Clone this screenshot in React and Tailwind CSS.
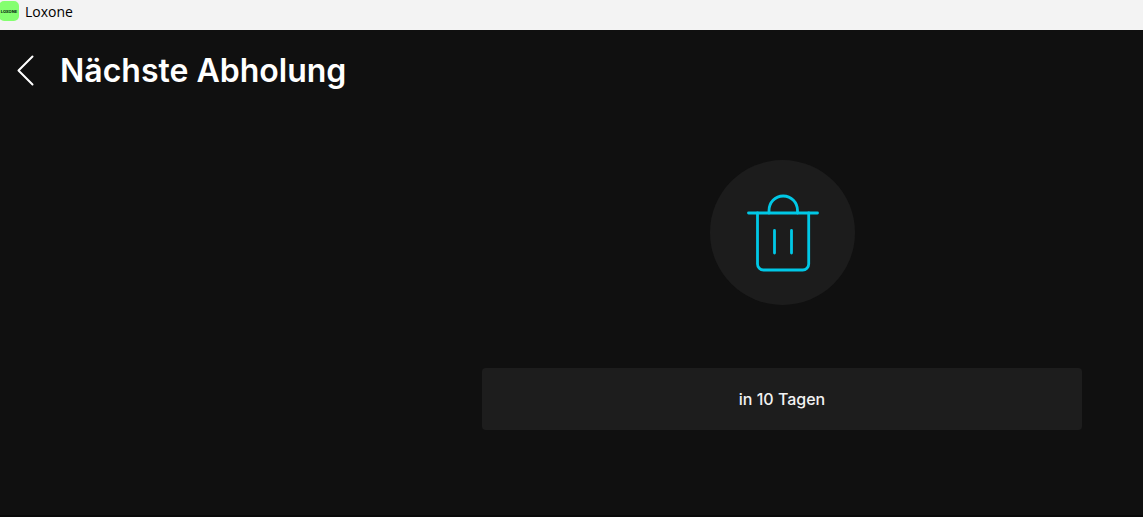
import React from 'react';

const daysUntilPickup = 10;

function TitleBar() {
  return (
    <div className="flex h-[30px] items-start bg-[#f3f3f3] text-black">
      <svg className="mt-px h-5 w-[19px]" viewBox="0 0 19 20" aria-hidden="true">
        <rect x="-1" width="20" height="20" rx="5" fill="#84ff70" />
        <text x="9" y="12" textAnchor="middle" fontSize="4" fontWeight="800" fontFamily="Inter, sans-serif" fill="#0f3515">LOXONE</text>
      </svg>
      <span className="ml-1.5 font-['Open_Sans',sans-serif] text-sm leading-6">Loxone</span>
    </div>
  );
}

function TrashIcon() {
  return (
    <svg
      className="size-full"
      viewBox="0 0 145 145"
      fill="none"
      stroke="#00c8e6"
      strokeWidth="2.8"
      strokeLinecap="round"
      strokeLinejoin="round"
      aria-hidden="true"
    >
      <path d="M38.5 53H107.5" />
      <path d="M59 53V50.5C59 42.5 65 36 73.2 36S87.5 42.5 87.5 50.5V53" />
      <path d="M47.5 53V104A6 6 0 0 0 53.5 110H92.7A6 6 0 0 0 98.7 104V53" />
      <path d="M64.5 70.5V93M81.5 70.5V93" />
    </svg>
  );
}

function App() {
  return (
    <div className="flex min-h-screen flex-col bg-[#101010] font-[Inter,sans-serif] text-white">
      <TitleBar />
      <header className="flex h-20 items-center pl-4">
        <button type="button" aria-label="Zurück" className="flex h-10 w-5 items-center">
          <svg className="h-8 w-5" viewBox="0 0 20 32" fill="none" stroke="currentColor" strokeWidth="2" strokeLinecap="round" strokeLinejoin="round">
            <path d="M16.5 2.5L2.5 16.5L16.5 30.5" />
          </svg>
        </button>
        <h1 className="ml-6 pt-0.5 text-[32px] leading-10 font-semibold">Nächste Abholung</h1>
      </header>
      <main className="flex flex-1 flex-col items-center border-b-2 border-[#090909] pt-[50px] pl-[421px]">
        <div className="size-[145px] rounded-full bg-[#1c1c1c]">
          <TrashIcon />
        </div>
        <div className="mt-[63px] flex h-[62px] w-full max-w-[600px] items-center justify-center rounded bg-[#1d1d1d] text-base font-medium text-[#f2f2f2]">
          in {daysUntilPickup} Tagen
        </div>
      </main>
    </div>
  );
}

export default App;
